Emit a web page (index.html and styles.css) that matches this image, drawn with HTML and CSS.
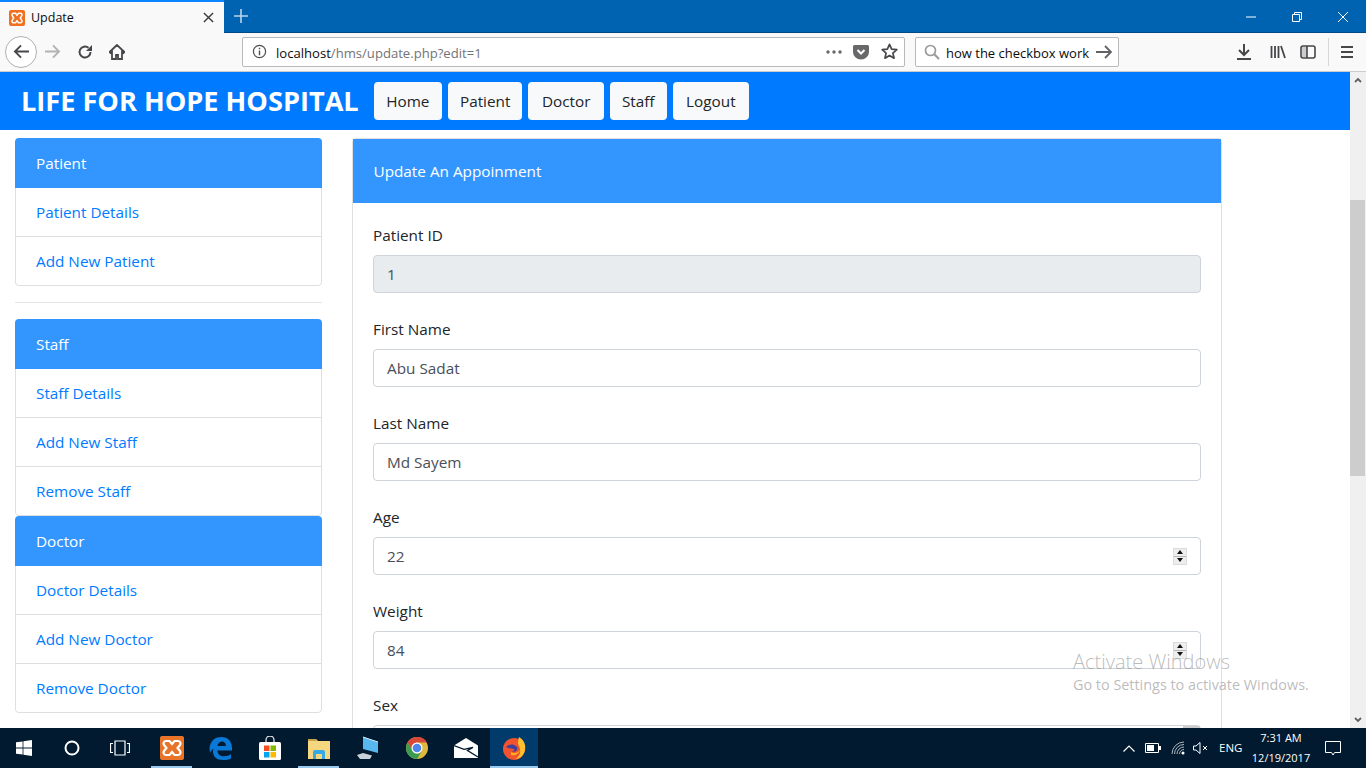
FILE: index.html
```html
<!DOCTYPE html>
<html lang="en">
<head>
<meta charset="utf-8">
<title>Update</title>
<link rel="stylesheet" href="styles.css">
</head>
<body>
<div class="screen">
  <header class="tabbar">
    <div class="tab">
      <svg class="favicon" viewBox="0 0 16 16"><rect width="16" height="16" rx="2" fill="#f0701e"/><path d="M4.500 3.200h2l1.500 2 1.500-2h2a1.600 1.600 0 0 1 1.300 2.500L11.300 8l1.500 2.300a1.600 1.600 0 0 1-1.300 2.500h-2L8 10.800l-1.500 2h-2a1.600 1.600 0 0 1-1.300-2.500L4.700 8 3.200 5.700a1.600 1.600 0 0 1 1.300-2.500z" fill="none" stroke="#fff" stroke-width="1.500"/></svg>
      <span class="tab-title">Update</span>
      <svg class="tab-close" viewBox="0 0 12 12"><path d="M1 1l10 10M11 1L1 11" stroke="#3a3a3c" stroke-width="1.500"/></svg>
    </div>
    <svg class="newtab" viewBox="0 0 14 14"><path d="M7 0v14M0 7h14" stroke="#bcd4ea" stroke-width="1.600"/></svg>
    <div class="winctl">
      <svg class="winbtn" viewBox="0 0 46 16"><path d="M18 8h10" stroke="#fff"/></svg>
      <svg class="winbtn" viewBox="0 0 46 16"><path d="M18.500 5.500h7v7h-7zM20.500 5.500v-2h7v7h-2" fill="none" stroke="#fff"/></svg>
      <svg class="winbtn" viewBox="0 0 46 16"><path d="M18 3l10 10M28 3L18 13" stroke="#fff"/></svg>
    </div>
  </header>

  <div class="toolbar">
    <div class="btn-back"><svg viewBox="0 0 18 16" class="ico18"><path d="M17 8H2M8.500 1.500L2 8l6.500 6.500" fill="none" stroke="#47474a" stroke-width="2"/></svg></div>
    <div class="tool tool-fwd"><svg viewBox="0 0 18 16" class="ico18"><path d="M1 8h15M9.500 1.500L16 8l-6.500 6.500" fill="none" stroke="#b3b3b4" stroke-width="2"/></svg></div>
    <div class="tool"><svg viewBox="0 0 16 16" class="ico16"><path d="M13.500 8A5.500 5.500 0 1 1 11.500 3.800" fill="none" stroke="#47474a" stroke-width="2"/><path d="M15 1v6H9z" fill="#47474a"/></svg></div>
    <div class="tool"><svg viewBox="0 0 16 16" class="ico16"><path d="M8 1L0.500 8l1 1L3 7.800V15h4v-4h2v4h4V7.800L14.500 9l1-1z" fill="none" stroke="#47474a" stroke-width="1.800"/></svg></div>
    <div class="urlbar">
      <svg class="info" viewBox="0 0 16 16"><circle cx="8" cy="8" r="6.500" fill="none" stroke="#4e4e50" stroke-width="1.300"/><path d="M8 7v5M8 4v1.600" stroke="#4e4e50" stroke-width="1.500"/></svg>
      <span class="url"><span class="url-host">localhost</span>/hms/update.php?edit=1</span>
      <svg class="dots" viewBox="0 0 16 4"><circle cx="2" cy="2" r="1.700"/><circle cx="8" cy="2" r="1.700"/><circle cx="14" cy="2" r="1.700"/></svg>
      <svg class="pocket" viewBox="0 0 16 16"><path d="M1.500 1h13A1.500 1.500 0 0 1 16 2.500V8A8 7.500 0 0 1 0 8V2.500A1.500 1.500 0 0 1 1.500 1z" fill="#68686a"/><path d="M4.500 6L8 9.500 11.500 6" fill="none" stroke="#fff" stroke-width="2"/></svg>
      <svg class="star" viewBox="0 0 16 16"><path d="M8 1.300l2 4.500 4.900.5-3.700 3.200 1.100 4.800L8 11.800l-4.300 2.500 1.100-4.800L1.100 6.300 6 5.800z" fill="none" stroke="#47474a" stroke-width="1.600" stroke-linejoin="round"/></svg>
    </div>
    <div class="searchbar">
      <svg class="glass" viewBox="0 0 16 16"><circle cx="6.500" cy="6.500" r="5" fill="none" stroke="#9a9a9c" stroke-width="1.700"/><path d="M10.300 10.300L15 15" stroke="#9a9a9c" stroke-width="2"/></svg>
      <span class="search-text">how the checkbox work</span>
      <svg class="go" viewBox="0 0 16 14"><path d="M0 7h15M9 1l6 6-6 6" fill="none" stroke="#636365" stroke-width="1.800"/></svg>
    </div>
    <div class="tools-right">
      <div class="tool"><svg viewBox="0 0 16 16" class="ico16"><path d="M8 0v10M3 6l5 5 5-5" fill="none" stroke="#47474a" stroke-width="2"/><path d="M1 15h14" stroke="#47474a" stroke-width="2"/></svg></div>
      <div class="tool tool-lib"><svg viewBox="0 0 16 16" class="ico16"><path d="M1.500 2v12M5 2v12M8.500 2v12M11 2l4 12" stroke="#47474a" stroke-width="1.800"/></svg></div>
      <div class="tool"><svg viewBox="0 0 16 16" class="ico16"><rect x="1" y="2" width="14" height="12" rx="2" fill="none" stroke="#47474a" stroke-width="1.600"/><path d="M7 2v12" stroke="#47474a" stroke-width="1.600"/><path d="M2 3h5v10H2z" fill="#47474a" opacity=".25"/></svg></div>
      <div class="tool-sep"></div>
      <div class="tool"><svg viewBox="0 0 16 16" class="ico16"><path d="M2 3h12M2 8h12M2 13h12" stroke="#47474a" stroke-width="2"/></svg></div>
    </div>
  </div>

  <div class="viewport">
    <div class="page">
      <nav class="navbar">
        <a class="brand">LIFE FOR HOPE HOSPITAL</a>
        <a class="nav-btn">Home</a>
        <a class="nav-btn nav-tight">Patient</a>
        <a class="nav-btn nav-wide">Doctor</a>
        <a class="nav-btn nav-tight">Staff</a>
        <a class="nav-btn nav-wide">Logout</a>
      </nav>
      <div class="content">
        <aside class="sidebar">
          <section class="panel">
            <div class="panel-head">Patient</div>
            <a class="panel-item">Patient Details</a>
            <a class="panel-item">Add New Patient</a>
          </section>
          <hr class="rule">
          <section class="panel">
            <div class="panel-head">Staff</div>
            <a class="panel-item">Staff Details</a>
            <a class="panel-item">Add New Staff</a>
            <a class="panel-item">Remove Staff</a>
          </section>
          <section class="panel">
            <div class="panel-head">Doctor</div>
            <a class="panel-item">Doctor Details</a>
            <a class="panel-item">Add New Doctor</a>
            <a class="panel-item">Remove Doctor</a>
          </section>
        </aside>
        <main class="card">
          <div class="card-head">Update An Appoinment</div>
          <form class="card-body">
            <div class="group"><label class="label">Patient ID</label><div class="control control-off">1</div></div>
            <div class="group"><label class="label">First Name</label><div class="control">Abu Sadat</div></div>
            <div class="group"><label class="label">Last Name</label><div class="control">Md Sayem</div></div>
            <div class="group"><label class="label">Age</label><div class="control">22<span class="spin"><span class="spin-cell"><i class="spin-up"></i></span><span class="spin-cell"><i class="spin-down"></i></span></span></div></div>
            <div class="group"><label class="label">Weight</label><div class="control">84<span class="spin"><span class="spin-cell"><i class="spin-up"></i></span><span class="spin-cell"><i class="spin-down"></i></span></span></div></div>
            <div class="group"><label class="label">Sex</label><div class="control control-select"><span class="select-btn"></span></div></div>
          </form>
        </main>
      </div>
    </div>
    <div class="scrollbar">
      <svg class="sb-arrow" viewBox="0 0 8 6"><path d="M1 5l3-3 3 3" fill="none" stroke="#606060" stroke-width="1.800"/></svg>
      <div class="sb-thumb"></div>
      <svg class="sb-arrow sb-arrow-down" viewBox="0 0 8 6"><path d="M1 1l3 3 3-3" fill="none" stroke="#606060" stroke-width="1.800"/></svg>
    </div>
    <div class="activate">
      <div class="activate-title">Activate Windows</div>
      <div class="activate-sub">Go to Settings to activate Windows.</div>
    </div>
  </div>

  <footer class="taskbar">
    <div class="tb-sys"><svg class="i16" viewBox="0 0 16 16"><path d="M0 2.300L6.600 1.400V7.500H0zM7.400 1.300L16 0V7.500H7.400zM0 8.400H6.600V14.600L0 13.700zM7.400 8.400H16V16L7.400 14.700z" fill="#fff"/></svg></div>
    <div class="tb-sys"><svg class="i16" viewBox="0 0 16 16"><circle cx="8" cy="8" r="6.500" fill="none" stroke="#fff" stroke-width="2"/></svg></div>
    <div class="tb-sys"><svg class="i20" viewBox="0 0 20 16"><path d="M5 1h10v14H5zM3 3.500H0.500v9H3M17 3.500h2.500v9H17" fill="none" stroke="#fff" stroke-width="1.200"/></svg></div>
    <div class="tb-app tb-mark"><svg class="i24" viewBox="0 0 24 24"><rect width="24" height="24" rx="2" fill="#e8742a"/><path d="M6 5h3.500L12 8l2.500-3H18a2.500 2.500 0 0 1 2 4l-2.500 3 2.500 3a2.500 2.500 0 0 1-2 4h-3.500L12 16l-2.500 3H6a2.500 2.500 0 0 1-2-4l2.500-3L4 9a2.500 2.500 0 0 1 2-4z" fill="none" stroke="#fff" stroke-width="2.200"/></svg></div>
    <div class="tb-app"><svg class="i24" viewBox="0 0 24 24"><path d="M0.500 12C1.500 4 7 1 12.500 1 19 1 23 5.500 23 12v2.500H8.500c0 4 3 5.800 6.500 5.800 3 0 5-.8 7-2v4.200c-2 1-4.500 1.500-8 1.500-6.500 0-10-3.500-10-8.500 0-1 .2-2 .5-3-1.500 1.200-3 3-3.500 4.500zM8.500 10h8.500c0-3-1.800-4.500-4-4.500S9 7 8.500 10z" fill="#0a78d6"/></svg></div>
    <div class="tb-app"><svg class="i24" viewBox="0 0 24 24"><path d="M8 7V4a4 4 0 0 1 8 0v3" fill="none" stroke="#ddd" stroke-width="1.300"/><rect x="1" y="6" width="22" height="18" rx="1.500" fill="#fff"/><rect x="6" y="9.500" width="5.500" height="5.500" fill="#f25022"/><rect x="12.500" y="9.500" width="5.500" height="5.500" fill="#7fba00"/><rect x="6" y="16" width="5.500" height="5.500" fill="#00a4ef"/><rect x="12.500" y="16" width="5.500" height="5.500" fill="#ffb900"/></svg></div>
    <div class="tb-app tb-mark"><svg class="i24" viewBox="0 0 24 24"><path d="M1 3h8l2 2h12v18H1z" fill="#f6d77f"/><path d="M1 3h8l1 2H1z" fill="#c9a54a"/><path d="M6 23v-7a2 2 0 0 1 2-2h8a2 2 0 0 1 2 2v7h-3v-5H9v5z" fill="#35a9e6"/></svg></div>
    <div class="tb-app"><svg class="i24" viewBox="0 0 24 24"><path d="M7 1l15 5v11L7 13z" fill="#58b7ee"/><path d="M7 1l15 5" stroke="#cfeefc"/><path d="M1 19l6-2 9 2.500-2 3.500H4z" fill="#c9d2d8"/></svg></div>
    <div class="tb-app"><svg class="i24" viewBox="0 0 24 24"><circle cx="12" cy="12" r="11" fill="#e0b83d"/><path d="M12 1a11 11 0 0 0-9.500 5.500L7 14a5.500 5.500 0 0 1 5-7.500h10A11 11 0 0 0 12 1z" fill="#d8483b"/><path d="M2.500 6.500A11 11 0 0 0 12 23l4.500-7.500A5.500 5.500 0 0 1 7 14z" fill="#3a9b52"/><circle cx="12" cy="12" r="5.500" fill="#fff"/><circle cx="12" cy="12" r="4.300" fill="#4f86ec"/></svg></div>
    <div class="tb-app"><svg class="i24" viewBox="0 0 24 24"><path d="M0 9.500L12 2l12 7.500V22H0z" fill="#fff"/><path d="M0 9.500l10 3.800 9-1.800-5.500 3L24 21" fill="none" stroke="#011a30" stroke-width="1.300"/></svg></div>
    <div class="tb-app tb-mark tb-active"><svg class="i24" viewBox="0 0 24 24"><circle cx="12" cy="13" r="11" fill="#f0532d"/><path d="M17 1c5 3 7 8 6 13-1 5-5 9-10 9 4-2 6-6 5-10-.5-3-2-4-2-6s.5-4 1-6z" fill="#ffc22e"/><path d="M4 11c2-2 5-3 8-2 3 1 4 3 3 5s-4 2-5 1c2 0 3-1 2-2-2-1-5 0-8-2z" fill="#3f3f9f"/><path d="M9 16c3 2 7 1 9-2-1 4-5 6-9 5z" fill="#ffae1a"/></svg></div>
    <div class="tray">
      <svg class="t-chev" viewBox="0 0 12 7"><path d="M0.500 6.500L6 1l5.500 5.500" fill="none" stroke="#fff" stroke-width="1.200"/></svg>
      <svg class="t-batt" viewBox="0 0 16 10"><path d="M0.500 0.500h13v9h-13z" fill="none" stroke="#fff"/><path d="M2 2h7v6H2z" fill="#fff"/><path d="M14 3h2v4h-2z" fill="#fff"/></svg>
      <svg class="t-wifi" viewBox="0 0 14 14"><path d="M1 13A12 12 0 0 1 13 1M3.500 13A9.500 9.500 0 0 1 13 3.500M6 13A7 7 0 0 1 13 6M8.500 13A4.500 4.500 0 0 1 13 8.500" fill="none" stroke="#aeb6bd"/><circle cx="12" cy="12" r="1.500" fill="#fff"/></svg>
      <svg class="t-sound" viewBox="0 0 16 12"><path d="M0.500 4h2.500l4-3.500v11L3 8H0.500z" fill="none" stroke="#fff"/><path d="M10 4l4 4M14 4l-4 4" stroke="#fff"/></svg>
      <span class="t-lang">ENG</span>
      <div class="t-clock"><div>7:31 AM</div><div>12/19/2017</div></div>
      <svg class="t-note" viewBox="0 0 16 15"><path d="M0.500 0.500h15v11h-6l-1.500 2.500-1.500-2.500h-6z" fill="none" stroke="#fff"/></svg>
    </div>
  </footer>
</div>
</body>
</html>
```
FILE: styles.css
```css
* { box-sizing: border-box; }
html, body { margin: 0; padding: 0; }
body { font-family: "Open Sans", "Noto Sans", "Liberation Sans", sans-serif; font-size: 15.300px; line-height: 24px; color: #212529; background: #fff; overflow: hidden; }
.screen { width: 1366px; height: 768px; display: flex; flex-direction: column; overflow: hidden; position: relative; }
svg { display: block; flex: none; }

/* window title strip */
.tabbar { height: 33px; flex: none; display: flex; align-items: flex-start; background: #0063b1; border-bottom: 1px solid #004b87; }
.tab { width: 224px; height: 33px; display: flex; align-items: center; background: #f9f9fa; border-top: 2px solid #0a84ff; padding: 0 10px 0 9px; }
.favicon { width: 16px; height: 16px; }
.tab-title { margin-left: 6px; font-size: 12.500px; color: #0c0c0d; flex: 1; }
.tab-close { width: 11px; height: 11px; }
.newtab { width: 14px; height: 14px; margin: 9px 0 0 10px; }
.winctl { margin-left: auto; display: flex; padding: 9px 0 0 0; }
.winbtn { width: 46px; height: 16px; }

/* toolbar */
.toolbar { height: 39px; flex: none; display: flex; align-items: center; background: #f9f9fa; border-bottom: 1px solid #ccc; padding: 0 4px 1px 5px; }
.btn-back { width: 32px; height: 32px; border-radius: 50%; border: 1px solid #b1b1b3; background: #fff; display: flex; align-items: center; justify-content: center; }
.tool { width: 32px; height: 30px; display: flex; align-items: center; justify-content: center; }
.tool-fwd { margin-left: -1px; margin-right: 1px; }
.ico18 { width: 17px; height: 15px; }
.ico16 { width: 16px; height: 16px; }
.urlbar { width: 663px; height: 30px; margin-left: 109px; background: #fff; border: 1px solid #b9b9bb; border-radius: 2px; display: flex; align-items: center; padding: 0 6px 0 9px; }
.info { width: 15px; height: 15px; }
.url { margin-left: 9px; font-size: 13.100px; color: #737373; flex: 1; white-space: nowrap; position: relative; top: 1px; }
.url-host { color: #0c0c0d; }
.dots { width: 16px; height: 4px; fill: #68686a; }
.pocket { width: 16px; height: 16px; margin-left: 11px; }
.star { width: 17px; height: 17px; margin-left: 12px; }
.searchbar { width: 204px; height: 30px; margin-left: 10px; background: #fff; border: 1px solid #b9b9bb; border-radius: 2px; display: flex; align-items: center; padding: 0 5px 0 8px; }
.glass { width: 16px; height: 16px; }
.search-text { width: 143px; margin-left: 6px; overflow: hidden; font-size: 13px; color: #0c0c0d; white-space: nowrap; position: relative; top: 1px; }
.go { width: 16px; height: 14px; margin-left: 7px; }
.tools-right { margin-left: auto; display: flex; align-items: center; }
.tools-right .tool { width: 30px; }
.tool-lib { margin-left: 4px; }
.tool-sep { width: 1px; height: 28px; background: #d7d7d8; margin: 0 3px 0 5px; }

/* page */
.viewport { flex: 1; min-height: 0; display: flex; position: relative; overflow: hidden; }
.page { width: 1350px; flex: none; overflow: hidden; }
.navbar { height: 58px; background: #007bff; display: flex; align-items: center; padding-left: 21px; gap: 6px; }
.brand { font-size: 27.150px; font-weight: 700; color: #fff; white-space: nowrap; margin-right: 9px; line-height: 36px; }
.nav-btn { height: 38px; padding: 0 12.500px; background: #f8f9fa; border-radius: 4px; color: #212529; display: flex; align-items: center; }
.nav-tight { padding: 0 12px; }
.nav-wide { padding: 0 13.500px; }
.content { display: flex; align-items: flex-start; padding: 8px 0 0 15px; gap: 30px; }
.sidebar { width: 307px; flex: none; }
.panel { border-radius: 4px; overflow: hidden; background: #fff; }
.panel-head { height: 50px; padding: 13px 21px; background: #3396ff; color: #fff; }
.panel-item { display: block; height: 49px; padding: 12px 20px; color: #007bff; border: 1px solid #dfdfdf; border-top: 0; }
.panel-item:last-child { border-radius: 0 0 4px 4px; }
.rule { height: 1px; border: 0; background: #e5e5e5; margin: 16px 0; }
.card { width: 870px; flex: none; border: 1px solid #dfdfdf; border-radius: 4px; background: #fff; }
.card-head { height: 64px; padding: 20px 20.500px; background: #3396ff; color: #fff; }
.card-body { padding: 20px 20px 0; }
.group { margin-bottom: 24px; }
.label { display: block; height: 24px; margin-bottom: 8px; }
.control { height: 38px; padding: 6px 13px; border: 1px solid #ced4da; border-radius: 4px; color: #495057; background: #fff; display: flex; align-items: center; }
.control-off { background: #e9ecef; }
.spin { margin-left: auto; width: 14px; height: 17px; background: #eee; display: flex; flex-direction: column; border: 1px solid #dcdcdc; }
.spin-cell { flex: 1; display: flex; align-items: center; justify-content: center; }
.spin-cell + .spin-cell { border-top: 1px solid #b5b5b5; }
.spin-up, .spin-down { display: block; width: 0; height: 0; border-left: 3.500px solid transparent; border-right: 3.500px solid transparent; }
.spin-up { border-bottom: 4px solid #111; }
.spin-down { border-top: 4px solid #111; }
.select-btn { margin-left: auto; margin-right: -13px; width: 17px; height: 36px; background: #ccc; }

/* scrollbar */
.scrollbar { flex: 1; background: #f0f0f0; position: relative; display: flex; flex-direction: column; align-items: center; }
.sb-arrow { width: 8px; height: 6px; margin-top: 5px; }
.sb-thumb { position: absolute; top: 128px; left: 0; width: 15px; height: 276px; background: #cdcdcd; }
.sb-arrow-down { margin-top: auto; margin-bottom: 5px; }

/* watermark */
.activate { position: absolute; left: 1073px; top: 577px; color: rgba(130,130,130,.55); pointer-events: none; white-space: nowrap; }
.activate-title { font-size: 20px; line-height: 26px; font-weight: 300; }
.activate-sub { font-size: 14.400px; line-height: 20px; }

/* taskbar */
.taskbar { height: 40px; flex: none; background: #011a30; display: flex; align-items: center; }
.tb-sys { width: 48px; height: 40px; display: flex; align-items: center; justify-content: center; }
.tb-app { width: 49px; height: 40px; display: flex; align-items: center; justify-content: center; position: relative; }
.taskbar .tb-sys + .tb-app { margin-left: 3px; }
.tb-mark::after { content: ""; position: absolute; left: 4px; right: 4px; bottom: 0; height: 2px; background: #99c9ef; }
.tb-active { background: #003b6b; width: 48px; }
.tb-active::after { left: 0; right: 0; }
.i16 { width: 16px; height: 16px; }
.i20 { width: 20px; height: 16px; }
.i24 { width: 24px; height: 24px; }
.tray { margin-left: auto; display: flex; align-items: center; color: #fff; font-size: 11.500px; height: 40px; padding-right: 25px; }
.t-chev { width: 12px; height: 7px; }
.t-batt { width: 16px; height: 10px; margin-left: 10px; }
.t-wifi { width: 14px; height: 14px; margin-left: 10px; }
.t-sound { width: 16px; height: 12px; margin-left: 8px; }
.t-lang { margin-left: 10px; width: 28px; }
.t-clock { width: 64px; margin-left: 2px; text-align: center; line-height: 20px; font-size: 11px; }
.t-note { width: 16px; height: 15px; margin-left: 12px; }
```
